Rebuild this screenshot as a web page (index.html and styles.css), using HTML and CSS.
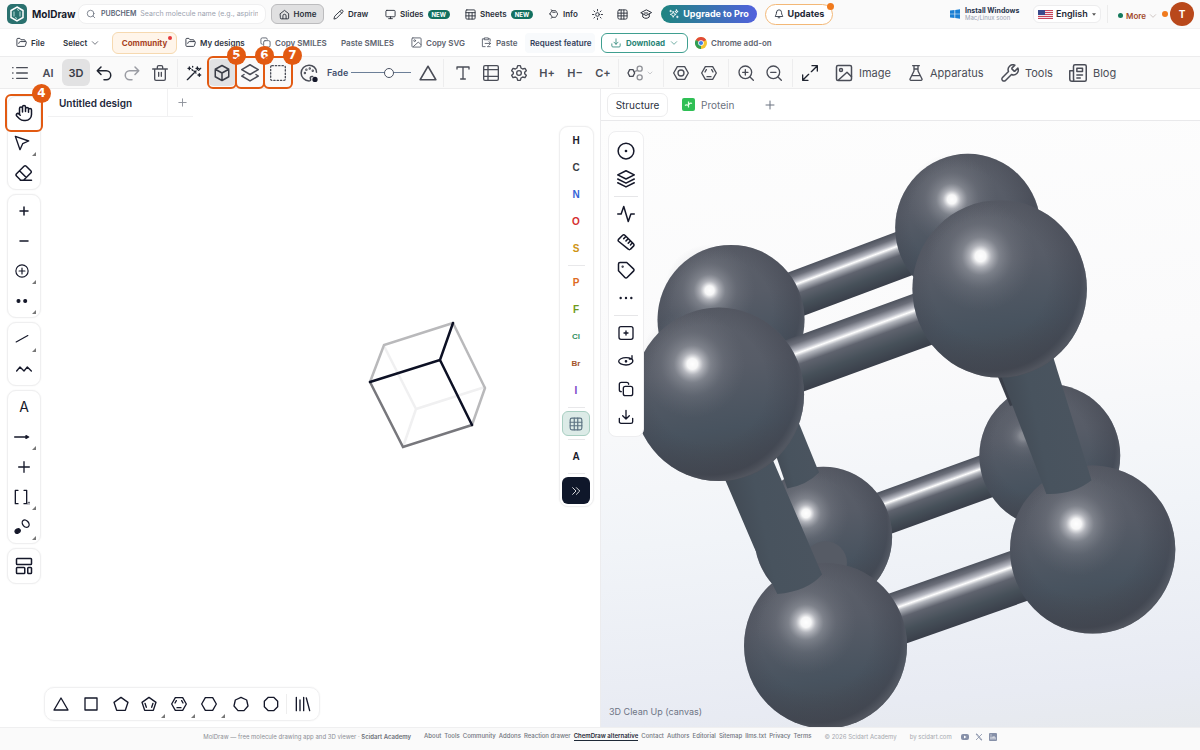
FILE: index.html
```
<!DOCTYPE html>
<html lang="en">
<head>
<meta charset="utf-8">
<title>MolDraw</title>
<link rel="stylesheet" href="styles.css">
</head>
<body>
<svg class="sprite" aria-hidden="true">
  <symbol id="home" viewBox="0 0 24 24"><path d="M3 10 12 3l9 7v10a1.500 1.500 0 0 1-1.500 1.500h-15A1.500 1.500 0 0 1 3 20zM8.500 21v-6a3.500 3.500 0 0 1 7 0v6"/></symbol>
  <symbol id="pencil" viewBox="0 0 24 24"><path d="M17 3a2.800 2.800 0 0 1 4 4L7.500 20.500 2 22l1.500-5.500zM15 5l4 4"/></symbol>
  <symbol id="monitor" viewBox="0 0 24 24"><rect x="2" y="3" width="20" height="14" rx="2"/><path d="M8 21h8M12 17v4"/></symbol>
  <symbol id="sheet" viewBox="0 0 24 24"><rect x="2" y="2" width="20" height="20" rx="2"/><path d="M2 8h20M2 15h20M8.500 8v14M15.500 8v14"/></symbol>
  <symbol id="info" viewBox="0 0 24 24"><path d="m8 4 8 0 5 8-5 8H8l-5-8zM8 4 5 2M3 12H0M8 20l-3 2M9 8h6"/></symbol>
  <symbol id="sun" viewBox="0 0 24 24"><circle cx="12" cy="12" r="4"/><path d="M12 1v3M12 20v3M1 12h3M20 12h3M4.200 4.200l2 2M17.800 17.800l2 2M4.200 19.800l2-2M17.800 6.200l2-2"/></symbol>
  <symbol id="grid" viewBox="0 0 24 24"><rect x="2" y="2" width="20" height="20" rx="3"/><path d="M2 9h20M2 15h20M9 2v20M15 2v20"/></symbol>
  <symbol id="cap" viewBox="0 0 24 24"><path d="M12 4 1.500 9.500 12 15l10.500-5.500zM5.500 12v6c4 3.500 9 3.500 13 0v-6M9 10h6"/></symbol>
  <symbol id="spark" viewBox="0 0 24 24"><path d="m10 6 2 5 5 2-5 2-2 5-2-5-5-2 5-2zM18 2l1 3 3 1-3 1-1 3-1-3-3-1 3-1zM4 3v4M2 5h4M20 17v4M18 19h4"/></symbol>
  <symbol id="bell" viewBox="0 0 24 24"><path d="M6 8a6 6 0 0 1 12 0c0 7 3 7 3 10H3c0-3 3-3 3-10M10 21h4"/></symbol>
  <symbol id="search" viewBox="0 0 24 24"><circle cx="11" cy="11" r="8"/><path d="m21 21-4.300-4.300"/></symbol>
  <symbol id="chev" viewBox="0 0 24 24"><path d="m4 8 8 8 8-8"/></symbol>
  <symbol id="folder" viewBox="0 0 24 24"><path d="m6 14 1.500-3A2 2 0 0 1 9.200 10H21a1.500 1.500 0 0 1 1.500 2l-2 7a2 2 0 0 1-2 1.500H4a2 2 0 0 1-2-2V5a2 2 0 0 1 2-2h4.500l2.500 3h7a2 2 0 0 1 2 2v2"/></symbol>
  <symbol id="copy" viewBox="0 0 24 24"><rect x="8" y="8" width="14" height="14" rx="3"/><path d="M5 16a3 3 0 0 1-3-3V5a3 3 0 0 1 3-3h8a3 3 0 0 1 3 3"/></symbol>
  <symbol id="image" viewBox="0 0 24 24"><rect x="2" y="2" width="20" height="20" rx="2"/><circle cx="8" cy="8" r="2"/><path d="m5 21 11-10 6 6"/></symbol>
  <symbol id="paste" viewBox="0 0 24 24"><path d="M8 4H3v17h6M16 4h4v5M8 2h8v4H8zM9 14h12M17 10l4 4-4 4M20 21h-6"/></symbol>
  <symbol id="download" viewBox="0 0 24 24"><path d="M12 2v13M7 10l5 5 5-5M2 14v5a2.500 2.500 0 0 0 2.500 2.500h15A2.500 2.500 0 0 0 22 19v-5"/></symbol>
  <symbol id="list" viewBox="0 0 24 24"><path d="M7 4h16M7 12h16M7 20h16M1 4h.5M1 12h.5M1 20h.5"/></symbol>
  <symbol id="undo" viewBox="0 0 24 24"><path d="M8 14 3 9l5-5M3 9h12a6 6 0 0 1 0 12h-3"/></symbol>
  <symbol id="redo" viewBox="0 0 24 24"><path d="m16 14 5-5-5-5M21 9H9a6 6 0 0 0 0 12h3"/></symbol>
  <symbol id="trash" viewBox="0 0 24 24"><path d="M1 6h22M4 6v15a2 2 0 0 0 2 2h12a2 2 0 0 0 2-2V6M8 6V3a2 2 0 0 1 2-2h4a2 2 0 0 1 2 2v3M10 11v6M14 11v6"/></symbol>
  <symbol id="wand" viewBox="0 0 24 24"><path d="M2 22 15 9M12 9l3 3M17 3v4M15 5h4M5 3v4M3 5h4M20 13v4M18 15h4M19 8l3-3M10 2v1M9 7l1 1"/></symbol>
  <symbol id="cube" viewBox="0 0 24 24"><path d="m12 2 9 5v10l-9 5-9-5V7zM3 7l9 5 9-5M12 12v10"/></symbol>
  <symbol id="layers2" viewBox="0 0 24 24"><path d="m12 1 11 6.500L12 14 1 7.500zM4 14l-3 2 11 6.500L23 16l-3-2"/></symbol>
  <symbol id="marquee" viewBox="0 0 24 24"><rect x="1" y="1" width="22" height="22" rx="2" stroke-dasharray="2 3"/></symbol>
  <symbol id="palette" viewBox="0 0 24 24"><path d="M22 11C22 5.500 17.500 1.500 12 1.500a10.500 10.500 0 0 0 0 21c2.500 0 2.500-1.500 2-2.700-.8-1.800 0-3.300 2-3.300h1"/><circle cx="6.500" cy="12" r=".6"/><circle cx="8.500" cy="7.500" r=".6"/><circle cx="13" cy="6" r=".6"/><circle cx="17" cy="9" r=".6"/><circle fill="#15182a" stroke="none" cx="20" cy="20.500" r="3.500"/></symbol>
  <symbol id="tri" viewBox="0 0 24 24"><path d="m12 3 10.500 18h-21z"/></symbol>
  <symbol id="text" viewBox="0 0 24 24"><path d="M3 6V3h18v3M12 3v18M8.500 21h7"/></symbol>
  <symbol id="table" viewBox="0 0 24 24"><rect x="1" y="1" width="22" height="22" rx="2"/><path d="M1 7h22M1 17h22M7.500 1v22"/></symbol>
  <symbol id="gear" viewBox="0 0 24 24"><path d="M10 1h4l1 3.500 2.500 1.500 3.500-1 2 3.500-2.500 2.500v2l2.500 2.500-2 3.500-3.500-1-2.500 1.500-1 3.500h-4l-1-3.500L6.500 18 3 19l-2-3.500L3.500 13v-2L1 8.500 3 5l3.500 1L9 4.500z"/><circle cx="12" cy="12" r="3.500"/></symbol>
  <symbol id="nodes" viewBox="0 0 24 24"><path d="M4 7h5l2.500 5L9 17H4l-2.500-5z"/><g opacity=".6"><circle cx="19" cy="5.500" r="3.800"/><circle cx="19" cy="18.500" r="3.800"/><path d="m11 10 5-2"/></g></symbol>
  <symbol id="benzene" viewBox="0 0 24 24"><path d="M6.500 2.500h11L23 12l-5.500 9.500h-11L1 12z"/><circle cx="12" cy="12" r="4.500"/></symbol>
  <symbol id="kekule" viewBox="0 0 24 24"><path d="M6.500 2.500h11L23 12l-5.500 9.500h-11L1 12zM9 17.500h6M6 10.500l2-3.500M16 7l2 3.500"/></symbol>
  <symbol id="zoomin" viewBox="0 0 24 24"><circle cx="11" cy="11" r="9.500"/><path d="m23 23-5-5M7 11h8M11 7v8"/></symbol>
  <symbol id="zoomout" viewBox="0 0 24 24"><circle cx="11" cy="11" r="9.500"/><path d="m23 23-5-5M7 11h8"/></symbol>
  <symbol id="expand" viewBox="0 0 24 24"><path d="M15 1h8v8M23 1l-9 9M9 23H1v-8M1 23l9-9"/></symbol>
  <symbol id="flask" viewBox="0 0 24 24"><path d="M7 1h10M9 1v8L3 21a1.500 1.500 0 0 0 1.500 2h15A1.500 1.500 0 0 0 21 21L15 9V1M6 16h12M9 6h6"/></symbol>
  <symbol id="wrench" viewBox="0 0 24 24"><path d="m14.500 6.500 3 3h1L22.500 5.500a6.500 6.500 0 0 1-8.500 8.500L6 22a2.800 2.800 0 0 1-4-4l8-8a6.500 6.500 0 0 1 8.500-8.500L14.500 5.500z"/></symbol>
  <symbol id="news" viewBox="0 0 24 24"><path d="M6 20V3a2 2 0 0 1 2-2h13a2 2 0 0 1 2 2v18a2 2 0 0 1-2 2H4a3 3 0 0 1-3-3V9h5v11a2 2 0 0 1-2 3M10.500 5.500H18V10h-7.500zM10.500 14.500H18M10.500 18.500H15"/></symbol>
  <symbol id="hand" viewBox="0 0 24 24"><path d="M18 11V6.500a2 2 0 0 0-4 0V5M14 10V4a2 2 0 0 0-4 0v2M10 10.500V6a2 2 0 0 0-4 0v8M18 8a2 2 0 1 1 4 0v6a8 8 0 0 1-8 8h-2c-2.800 0-4.500-.9-6-2.300L2.300 16a2 2 0 0 1 2.900-2.800L7 15"/></symbol>
  <symbol id="cursor" viewBox="0 0 24 24"><path d="m2 2 20 7-9 4-4 9z"/></symbol>
  <symbol id="eraser" viewBox="0 0 24 24"><path d="m7 21-5-5c-1-1-1-2 0-3L12 3c1-1 2-1 3 0l6 6c1 1 1 2 0 3l-9 9M22 21.500H7M6 9l9 9"/></symbol>
  <symbol id="plus" viewBox="0 0 24 24"><path d="M12 4v16M4 12h16"/></symbol>
  <symbol id="minus" viewBox="0 0 24 24"><path d="M4 12h16"/></symbol>
  <symbol id="cplus" viewBox="0 0 24 24"><circle cx="12" cy="12" r="10.500"/><path d="M12 7v10M7 12h10"/></symbol>
  <symbol id="dots2" viewBox="0 0 24 24"><g class="solid"><circle cx="6" cy="12" r="2.500"/><circle cx="17.500" cy="12" r="2.500"/></g></symbol>
  <symbol id="dots3" viewBox="0 0 24 24"><g class="solid"><circle cx="4" cy="12" r=".8"/><circle cx="12" cy="12" r=".8"/><circle cx="20" cy="12" r=".8"/></g></symbol>
  <symbol id="bond" viewBox="0 0 24 24"><path d="M2 17 22 6"/></symbol>
  <symbol id="chain" viewBox="0 0 24 24"><path d="m1 15 5-6 6 6 5-6 6 6"/></symbol>
  <symbol id="arrow" viewBox="0 0 24 24"><path d="M1 12h18M18 10l4 2-4 2z"/></symbol>
  <symbol id="brackets" viewBox="0 0 24 24"><path d="M6 2H2v20h4M15 2h4v20h-4"/><path stroke-width="1" d="M21 23v-3h3v3"/></symbol>
  <symbol id="orbital" viewBox="0 0 24 24"><ellipse class="solid" cx="5.500" cy="18" rx="4" ry="3" transform="rotate(-25 5.500 18)"/><ellipse cx="17.500" cy="7" rx="4.500" ry="6" transform="rotate(-40 17.500 7)"/></symbol>
  <symbol id="template" viewBox="0 0 24 24"><rect x="2" y="2" width="20" height="8" rx="1"/><rect x="2" y="14" width="11" height="8" rx="1"/><rect x="17" y="14" width="5" height="8" rx="1"/></symbol>
  <symbol id="square" viewBox="0 0 24 24"><path d="M3 3h18v18H3z"/></symbol>
  <symbol id="penta" viewBox="0 0 24 24"><path d="m12 2 10.500 7.500-4 12h-13l-4-12z"/></symbol>
  <symbol id="penta2" viewBox="0 0 24 24"><path d="m12 2 10.500 7.500-4 12h-13l-4-12zM6 11l2 6M18 11l-2 6"/></symbol>
  <symbol id="hex" viewBox="0 0 24 24"><path d="M6.500 2.500h11L23 12l-5.500 9.500h-11L1 12z"/></symbol>
  <symbol id="hepta" viewBox="0 0 24 24"><path d="m12 2 8.500 4L22.500 15l-6 7h-9l-6-7 2-9z"/></symbol>
  <symbol id="octa" viewBox="0 0 24 24"><path d="M8 2h8l6 6v8l-6 6H8l-6-6V8z"/></symbol>
  <symbol id="library" viewBox="0 0 24 24"><path d="M2 2v20M7.500 6v16M13 2v20M17 3l5 19"/></symbol>
  <symbol id="dbl" viewBox="0 0 24 24"><path d="m4 4 8 8-8 8M13 4l8 8-8 8"/></symbol>
  <symbol id="target" viewBox="0 0 24 24"><circle cx="12" cy="12" r="10.500"/><circle class="solid" cx="12" cy="12" r=".8"/></symbol>
  <symbol id="layers3" viewBox="0 0 24 24"><path d="m12 1 11 5.500L12 12 1 6.500zM1 12l11 5.500L23 12M1 17l11 5.500L23 17"/></symbol>
  <symbol id="pulse" viewBox="0 0 24 24"><path d="M1 12h4.500L9 2l6 20 3.500-10H23"/></symbol>
  <symbol id="ruler" viewBox="0 0 24 24"><path d="m2 8.500 5.500-5.500a2 2 0 0 1 3 0L22 14.500a2 2 0 0 1 0 3L18 21.500a2 2 0 0 1-3 0L2 11a2 2 0 0 1 0-2.500M11.500 5 9 7.500M14.500 8 12 10.500M17.500 11 15 13.500M20 13.500 18 16"/></symbol>
  <symbol id="tag" viewBox="0 0 24 24"><path d="M13 2H4a2 2 0 0 0-2 2v9l8.500 9a2 2 0 0 0 3 0l8.500-8.500a2 2 0 0 0 0-3z"/><circle class="solid" cx="7.500" cy="7.500" r=".5"/></symbol>
  <symbol id="splus" viewBox="0 0 24 24"><rect x="1.500" y="2.500" width="21" height="19" rx="3"/><path d="M12 9v6M9 12h6"/></symbol>
  <symbol id="orbit" viewBox="0 0 24 24"><path d="M21 9c4 5-3 9-9 9S1 15.500 1 12.500 6 7 12 7c3 0 6 .5 9 2M21 4v5h-4"/><circle class="solid" cx="12" cy="12.500" r="1"/></symbol>
  <symbol id="corner" viewBox="0 0 6 6"><path d="M6 0v6H0z"/></symbol>
</svg>

<header class="topbar">
  <div class="brand">
    <svg class="logo" viewBox="0 0 20 20"><rect width="20" height="20" rx="5" fill="#2a716f"/><path d="m10 3 6 3.500v7L10 17l-6-3.500v-7z" fill="none" stroke="#fff" stroke-width="1.500"/><path d="M7 7.500v5M13 7.500v5M10 5.500l2 1M8 13.500l2 1" stroke="#b8e0da" stroke-width="1"/></svg>
    <strong>MolDraw</strong>
  </div>
  <div class="search">
    <svg class="ic s10"><use href="#search"/></svg>
    <label for="q">PUBCHEM</label>
    <input id="q" type="text" placeholder="Search molecule name (e.g., aspirin)">
  </div>
  <button class="nav home"><svg class="ic s11"><use href="#home"/></svg>Home</button>
  <button class="nav"><svg class="ic s11"><use href="#pencil"/></svg>Draw</button>
  <button class="nav"><svg class="ic s11"><use href="#monitor"/></svg>Slides<span class="new">NEW</span></button>
  <button class="nav"><svg class="ic s11"><use href="#sheet"/></svg>Sheets<span class="new">NEW</span></button>
  <button class="nav"><svg class="ic s10"><use href="#info"/></svg>Info</button>
  <button class="nav" aria-label="Theme"><svg class="ic s11"><use href="#sun"/></svg></button>
  <button class="nav" aria-label="Periodic table"><svg class="ic s11"><use href="#grid"/></svg></button>
  <button class="nav" aria-label="Learn"><svg class="ic s12"><use href="#cap"/></svg></button>
  <button class="upgrade"><svg class="ic s10"><use href="#spark"/></svg>Upgrade to Pro</button>
  <button class="updates"><svg class="ic s10"><use href="#bell"/></svg>Updates<i class="odot"></i></button>
  <span></span>
  <a class="install" href="#"><svg class="win" viewBox="0 0 10 10"><path fill="#1a7fd4" d="M0 1.500 4.500 1v3.700H0zM5.200.9 10 .2v4.500H5.200zM0 5.300h4.500V9L0 8.500zM5.200 5.300H10v4.500l-4.800-.7z"/></svg><span><b>Install Windows</b><small>Mac/Linux soon</small></span></a>
  <div class="lang">
    <svg class="flag" viewBox="0 0 15 9"><path fill="#f3e6e9" d="M0 0h15v9H0z"/><path stroke="#c8435a" d="M0 .5h15M0 2.500h15M0 4.500h15M0 6.500h15M0 8.500h15"/><path fill="#3a4a8c" d="M0 0h7v5H0z"/></svg>
    <select aria-label="Language"><option>English</option></select>
    <svg class="caret" viewBox="0 0 6 4"><path d="M0 0h6L3 4z"/></svg>
  </div>
  <i class="vline"></i>
  <button class="more"><i class="gdot"></i>More<svg class="ic s8"><use href="#chev"/></svg><i class="bdot"></i></button>
  <button class="avatar">T</button>
</header>

<nav class="menubar">
  <button class="menu"><svg class="ic s11"><use href="#folder"/></svg>File</button>
  <button class="menu">Select<svg class="ic s8"><use href="#chev"/></svg></button>
  <button class="community">Community<i class="rdot"></i></button>
  <button class="menu"><svg class="ic s11"><use href="#folder"/></svg>My designs</button>
  <button class="menu soft"><svg class="ic s11"><use href="#copy"/></svg>Copy SMILES</button>
  <button class="menu soft">Paste SMILES</button>
  <button class="menu soft"><svg class="ic s11"><use href="#image"/></svg>Copy SVG</button>
  <button class="menu soft"><svg class="ic s11"><use href="#paste"/></svg>Paste</button>
  <button class="request">Request feature</button>
  <button class="dl"><svg class="ic s10"><use href="#download"/></svg>Download<svg class="ic s8"><use href="#chev"/></svg></button>
  <a class="menu soft" href="#"><svg class="chrome" viewBox="0 0 12 12"><circle cx="6" cy="6" r="6" fill="#f4c430"/><path fill="#e04a3a" d="M6 6 .8 3A6 6 0 0 1 11.200 3z"/><path fill="#2f9e57" d="M6 6 .8 3A6 6 0 0 0 6 12z"/><circle cx="6" cy="6" r="2.800" fill="#fff"/><circle cx="6" cy="6" r="2.100" fill="#3f7fe8"/></svg>Chrome add-on</a>
</nav>

<div class="toolbar">
  <div class="tg">
    <button class="tb"><svg class="ic s16"><use href="#list"/></svg></button>
    <button class="tb">AI</button>
    <button class="tb on">3D</button>
    <button class="tb"><svg class="ic s18 dark"><use href="#undo"/></svg></button>
    <button class="tb"><svg class="ic s18 faint"><use href="#redo"/></svg></button>
    <button class="tb"><svg class="ic s16"><use href="#trash"/></svg></button>
  </div>
  <div class="tg line p2">
    <button class="tb"><svg class="ic s16 dark"><use href="#wand"/></svg></button>
    <button class="tb on"><svg class="ic s18"><use href="#cube"/></svg><span class="mark"><b>5</b></span></button>
    <button class="tb"><svg class="ic s18"><use href="#layers2"/></svg><span class="mark"><b>6</b></span></button>
    <button class="tb"><svg class="ic s16"><use href="#marquee"/></svg><span class="mark"><b>7</b></span></button>
  </div>
  <div class="tg">
    <button class="tb"><svg class="ic s18"><use href="#palette"/></svg></button>
    <label class="fade" for="fade">Fade</label>
    <input id="fade" class="range" type="range" min="0" max="100" value="66">
    <button class="tb"><svg class="ic s18"><use href="#tri"/></svg></button>
  </div>
  <div class="tg line p5">
    <button class="tb"><svg class="ic s16"><use href="#text"/></svg></button>
    <button class="tb"><svg class="ic s16"><use href="#table"/></svg></button>
    <button class="tb"><svg class="ic s16"><use href="#gear"/></svg></button>
    <button class="tb">H+</button>
    <button class="tb">H−</button>
    <button class="tb">C+</button>
  </div>
  <div class="tg line p5">
    <button class="tb nodes"><svg class="ic s16"><use href="#nodes"/></svg><svg class="ic s6 faint"><use href="#chev"/></svg></button>
  </div>
  <div class="tg line p3">
    <button class="tb"><svg class="ic s16"><use href="#benzene"/></svg></button>
    <button class="tb"><svg class="ic s16"><use href="#kekule"/></svg></button>
  </div>
  <div class="tg line p3">
    <button class="tb"><svg class="ic s16"><use href="#zoomin"/></svg></button>
    <button class="tb"><svg class="ic s16"><use href="#zoomout"/></svg></button>
  </div>
  <div class="tg line p3">
    <button class="tb"><svg class="ic s16 dark"><use href="#expand"/></svg></button>
  </div>
  <button class="link"><svg class="ic s18"><use href="#image"/></svg>Image</button>
  <button class="link"><svg class="ic s16"><use href="#flask"/></svg>Apparatus</button>
  <button class="link"><svg class="ic s18"><use href="#wrench"/></svg>Tools</button>
  <button class="link"><svg class="ic s18"><use href="#news"/></svg>Blog</button>
</div>

<main class="work">
  <section class="editor">
    <aside class="rail">
      <div class="card">
        <button class="rb"><svg class="ic s18"><use href="#hand"/></svg><span class="mark wide"><b>4</b></span></button>
        <button class="rb left"><svg class="ic s16"><use href="#cursor"/></svg><svg class="cn"><use href="#corner"/></svg></button>
        <button class="rb"><svg class="ic s18"><use href="#eraser"/></svg></button>
      </div>
      <div class="card">
        <button class="rb"><svg class="ic s12 thick"><use href="#plus"/></svg></button>
        <button class="rb"><svg class="ic s12 thick"><use href="#minus"/></svg></button>
        <button class="rb left"><svg class="ic s14"><use href="#cplus"/></svg><svg class="cn"><use href="#corner"/></svg></button>
        <button class="rb left"><svg class="ic s14"><use href="#dots2"/></svg><svg class="cn"><use href="#corner"/></svg></button>
      </div>
      <div class="card">
        <button class="rb left"><svg class="ic s14"><use href="#bond"/></svg><svg class="cn"><use href="#corner"/></svg></button>
        <button class="rb"><svg class="ic s16"><use href="#chain"/></svg></button>
      </div>
      <div class="card">
        <button class="rb letter">A</button>
        <button class="rb left"><svg class="ic s16"><use href="#arrow"/></svg><svg class="cn"><use href="#corner"/></svg></button>
        <button class="rb"><svg class="ic s16"><use href="#plus"/></svg></button>
        <button class="rb left"><svg class="ic s16"><use href="#brackets"/></svg><svg class="cn"><use href="#corner"/></svg></button>
        <button class="rb left"><svg class="ic s16"><use href="#orbital"/></svg><svg class="cn"><use href="#corner"/></svg></button>
      </div>
      <div class="card last">
        <button class="rb"><svg class="ic s18"><use href="#template"/></svg></button>
      </div>
    </aside>
    <div class="sheet">
      <div class="tabs">
        <button class="doc">Untitled design</button>
        <button class="add" aria-label="New design"><svg class="ic s11"><use href="#plus"/></svg></button>
      </div>
      <div class="canvas">
        <svg class="drawing" viewBox="0 0 124 134">
          <g fill="none" stroke-width="2.500" stroke-linecap="round">
            <path stroke="#f0f0f1" d="M18 29 50 92M50 92l69-22M50 92l-13 38"/>
            <path stroke="#b9b9bb" d="M87 6 18 28 4 65M87 6l32 65-13 37"/>
            <path stroke="#77777c" d="m4 65 33 65 69-22"/>
            <path stroke="#0c1024" d="m4 65 70-22L87 6M74 43l32 65"/>
          </g>
        </svg>
      </div>
      <div class="rings">
        <button class="rg"><svg class="ic s16"><use href="#tri"/></svg></button>
        <button class="rg"><svg class="ic s16"><use href="#square"/></svg></button>
        <button class="rg"><svg class="ic s16"><use href="#penta"/></svg></button>
        <button class="rg left"><svg class="ic s16"><use href="#penta2"/></svg><svg class="cn"><use href="#corner"/></svg></button>
        <button class="rg left"><svg class="ic s16"><use href="#kekule"/></svg><svg class="cn"><use href="#corner"/></svg></button>
        <button class="rg left"><svg class="ic s16"><use href="#hex"/></svg><svg class="cn"><use href="#corner"/></svg></button>
        <button class="rg"><svg class="ic s16"><use href="#hepta"/></svg></button>
        <button class="rg"><svg class="ic s16"><use href="#octa"/></svg></button>
        <button class="rg lib"><svg class="ic s16"><use href="#library"/></svg></button>
      </div>
    </div>
    <aside class="elements">
      <button class="el">H</button>
      <button class="el c">C</button>
      <button class="el n">N</button>
      <button class="el o">O</button>
      <button class="el s">S</button>
      <hr>
      <button class="el p">P</button>
      <button class="el f">F</button>
      <button class="el cl">Cl</button>
      <button class="el br">Br</button>
      <button class="el i">I</button>
      <hr>
      <button class="el pt" aria-label="Periodic table"><svg class="ic s14"><use href="#grid"/></svg></button>
      <hr>
      <button class="el">A</button>
      <hr>
      <button class="el go" aria-label="Collapse"><svg class="ic s10"><use href="#dbl"/></svg></button>
    </aside>
  </section>

  <section class="viewer">
    <div class="vtabs">
      <button class="vt on">Structure</button>
      <button class="vt prot"><svg class="pi" viewBox="0 0 13 13"><rect width="13" height="13" rx="2" fill="#2fbf55"/><path d="M3 7.500c2-2 2.500 1 4-1s1-2 3-1M6.500 3.500v6" fill="none" stroke="#e6ffe9" stroke-width="1.200"/></svg>Protein</button>
      <button class="vt" aria-label="Add view"><svg class="ic s12"><use href="#plus"/></svg></button>
    </div>
    <div class="stage">
      <svg class="scene" viewBox="0 1 600 606" preserveAspectRatio="xMidYMid slice">
        <defs>
          <linearGradient id="base" x1=".4" y1="0" x2=".55" y2="1"><stop offset="0" stop-color="#5c606a"/><stop offset=".35" stop-color="#575c67"/><stop offset=".7" stop-color="#48535f"/><stop offset="1" stop-color="#42474f"/></linearGradient>
          <radialGradient id="rim" cx=".44" cy=".44" r=".57"><stop offset=".6" stop-color="#40434e" stop-opacity="0"/><stop offset=".92" stop-color="#40434e" stop-opacity=".5"/><stop offset="1" stop-color="#5a5d67" stop-opacity=".6"/></radialGradient>
          <radialGradient id="shine"><stop offset="0" stop-color="#fff"/><stop offset=".1" stop-color="#fff" stop-opacity=".95"/><stop offset=".2" stop-color="#eeeef2" stop-opacity=".6"/><stop offset=".35" stop-color="#c4c6cc" stop-opacity=".35"/><stop offset=".6" stop-color="#a0a2aa" stop-opacity=".17"/><stop offset="1" stop-color="#80838c" stop-opacity="0"/></radialGradient>
          <linearGradient id="rod" x1="0" y1="0" x2="0" y2="1"><stop offset="0" stop-color="#4d525d"/><stop offset=".12" stop-color="#6b6e79"/><stop offset=".24" stop-color="#b9bbc4"/><stop offset=".3" stop-color="#fff"/><stop offset=".36" stop-color="#b4b7be"/><stop offset=".5" stop-color="#5f636e"/><stop offset=".75" stop-color="#465059"/><stop offset="1" stop-color="#3a3f4a"/></linearGradient>
          <linearGradient id="post" x1="0" y1=".2" x2="1" y2="-.1"><stop offset="0" stop-color="#414953"/><stop offset=".3" stop-color="#48535e"/><stop offset=".7" stop-color="#4a545f"/><stop offset="1" stop-color="#424a54"/></linearGradient>
          <g id="ball"><circle r="100" fill="url(#base)"/><circle r="100" fill="url(#rim)"/></g>
          <circle id="glow" r="62" fill="url(#shine)"/>
        </defs>
        <g transform="scale(.3827 .3891)">
          <rect fill="url(#rod)" width="430" height="119" transform="translate(443 409) rotate(-20.200)"/>
          <use href="#ball" transform="translate(960 277) scale(1.900)"/>
          <use href="#glow" transform="translate(918 204) scale(1.900)"/>
          <use href="#ball" transform="translate(341 513) scale(1.920)"/>
          <use href="#glow" transform="translate(285 438) scale(1.920)"/>
          <rect fill="url(#rod)" width="400" height="112" transform="translate(677 974) rotate(-19.600)"/>
          <use href="#ball" transform="translate(1174 863) scale(1.840)"/>
          <use href="#glow" transform="translate(1105 812) scale(1.500)" opacity=".3"/>
          <path fill="#393e48" d="M1030 640l40 95 40-10-50-85z"/>
          <use href="#ball" transform="translate(582 1071) scale(1.800)"/>
          <use href="#glow" transform="translate(537 1011) scale(1.800)"/>
          <circle cx="588" cy="1138" r="56" fill="#565b65"/>
          <path fill="url(#post)" d="M430 780 518 778 571 906Q540 938 488 947z"/>
          <rect fill="url(#rod)" width="450" height="140" transform="translate(433 584) rotate(-19.700)"/>
          <rect fill="url(#rod)" width="420" height="136" transform="translate(708 1233) rotate(-19.100)"/>
          <use href="#ball" transform="translate(1286 1104) scale(2.160)"/>
          <use href="#glow" transform="translate(1243 1038) scale(2.160)"/>
          <path fill="url(#post)" d="M1040 640 1165 961Q1235 964 1283 926L1180 600z"/>
          <use href="#ball" transform="translate(588 1351) scale(2.130)"/>
          <use href="#glow" transform="translate(537 1291) scale(2.130)"/>
          <path fill="url(#post)" d="M315 900Q400 880 440 850L579 1168Q540 1212 462 1218L402 1100z"/>
          <use href="#ball" transform="translate(1043 434) scale(2.280)"/>
          <use href="#glow" transform="translate(993 350) scale(2.280)"/>
          <use href="#ball" transform="translate(309 705) scale(2.230)"/>
          <use href="#glow" transform="translate(240 627) scale(2.230)"/>
        </g>
      </svg>
      <div class="vtools">
        <button class="vb"><svg class="ic s18"><use href="#target"/></svg></button>
        <button class="vb"><svg class="ic s18"><use href="#layers3"/></svg></button>
        <hr>
        <button class="vb"><svg class="ic s18"><use href="#pulse"/></svg></button>
        <button class="vb"><svg class="ic s18"><use href="#ruler"/></svg></button>
        <button class="vb"><svg class="ic s18"><use href="#tag"/></svg></button>
        <button class="vb"><svg class="ic s16"><use href="#dots3"/></svg></button>
        <hr>
        <button class="vb"><svg class="ic s16"><use href="#splus"/></svg></button>
        <button class="vb"><svg class="ic s16"><use href="#orbit"/></svg></button>
        <button class="vb"><svg class="ic s16"><use href="#copy"/></svg></button>
        <button class="vb"><svg class="ic s16"><use href="#download"/></svg></button>
      </div>
      <p class="hint">3D Clean Up (canvas)</p>
    </div>
  </section>
</main>

<footer class="foot">
  <p>MolDraw — free molecule drawing app and 3D viewer · <b>Scidart Academy</b></p>
  <nav class="flinks">
    <a href="#">About</a><a href="#">Tools</a><a href="#">Community</a><a href="#">Addons</a><a href="#">Reaction drawer</a><a class="cur" href="#">ChemDraw alternative</a><a href="#">Contact</a><a href="#">Authors</a><a href="#">Editorial</a><a href="#">Sitemap</a><a href="#">llms.txt</a><a href="#">Privacy</a><a href="#">Terms</a>
  </nav>
  <p class="pale">© 2026 Scidart Academy</p>
  <div class="by">
    <p class="pale">by scidart.com</p>
    <a href="#" aria-label="YouTube"><svg viewBox="0 0 8 8"><rect y="1" width="8" height="6" rx="2" fill="#8690a8"/><path fill="#fff" d="m3 2.500 2.500 1.500L3 5.500z"/></svg></a>
    <a href="#" aria-label="X"><svg viewBox="0 0 8 8"><path d="m1 1 5 6h1L2 1zM7 1 1 7" fill="none" stroke="#8690a8" stroke-width=".8"/></svg></a>
    <a href="#" aria-label="LinkedIn"><svg viewBox="0 0 8 8"><rect width="8" height="8" rx="1" fill="#8690a8"/><path d="M2 3.500v3M2 1.500v1M4 6.500v-3M4 4.500c.5-1 2-1 2 .3v1.700" fill="none" stroke="#fff" stroke-width=".9"/></svg></a>
  </div>
</footer>
</body>
</html>
```
FILE: styles.css
```
* { box-sizing: border-box; }
body { margin: 0; min-height: 100vh; display: flex; flex-direction: column; background: #fff; color: #1f2937; font-family: Inter, "Liberation Sans", sans-serif; font-size: 8px; line-height: 12px; }
button, input, select { font: inherit; color: inherit; border: 0; background: none; padding: 0; margin: 0; }
button { display: flex; align-items: center; white-space: nowrap; }
a { color: inherit; text-decoration: none; }
p { margin: 0; }
.sprite { position: absolute; width: 0; height: 0; }
.ic { fill: none; stroke: currentColor; stroke-width: 2; stroke-linecap: round; stroke-linejoin: round; flex: none; }
.solid { fill: currentColor; }
.s6 { width: 6px; height: 6px; }
.s8 { width: 8px; height: 8px; }
.s10 { width: 10px; height: 10px; }
.s11 { width: 11px; height: 11px; }
.s12 { width: 12px; height: 12px; }
.s14 { width: 14px; height: 14px; }
.s16 { width: 16px; height: 16px; }
.s18 { width: 18px; height: 18px; }
.dark { color: #1f2430; }
.faint { color: #9a9ca3; }
.thick { stroke-width: 3; }

.topbar { display: grid; grid-template-columns: 71px 193px 62px 52px 80px 84px 43px 25px 23px 21px 104px 67px 1fr 83px 74px 11px 52px 24px; align-items: center; height: 28px; padding: 0 6px 0 7px; background: #fafafa; }
.brand { display: flex; align-items: center; gap: 5px; font-size: 10px; color: #15192a; }
.logo { width: 20px; height: 20px; }
.search { display: flex; align-items: center; width: 188px; height: 20px; padding: 0 7px; background: #fff; border: 1px solid #efeff0; border-radius: 8px; color: #6b7280; }
.search label { margin: 0 4px 0 5px; font-size: 7px; font-weight: 600; color: #5b6577; }
.search input { flex: 1; min-width: 0; font-size: 7px; outline: none; }
.search input::placeholder { color: #9ca3af; }
.nav { gap: 4px; font-weight: 600; color: #2b303b; }
.home { width: 53px; height: 20px; justify-content: center; background: #e0e0e1; border: 1px solid #bcbcbe; border-radius: 6px; }
.new { padding: 0 4px; border-radius: 5px; background: #12705f; color: #fff; font-size: 6px; line-height: 9px; font-weight: 700; }
.upgrade { width: 96px; height: 18px; justify-content: center; gap: 4px; border-radius: 9px; background: linear-gradient(90deg, #1e8580, #5261dd); color: #fff; font-size: 9px; font-weight: 700; }
.updates { position: relative; width: 68px; height: 21px; justify-content: center; gap: 4px; border: 1px solid #f3b877; border-radius: 11px; background: #fff; font-size: 9px; font-weight: 700; }
.odot { position: absolute; right: -2px; top: -2px; width: 7px; height: 7px; border-radius: 50%; background: #f07a1d; }
.install { display: flex; align-items: center; gap: 5px; white-space: nowrap; }
.win { width: 10px; height: 10px; }
.install b, .install small { display: block; font-size: 7px; line-height: 8px; font-weight: 700; color: #27324a; }
.install small { font-size: 6px; line-height: 6px; font-weight: 400; color: #99a2b3; }
.lang { display: flex; align-items: center; width: 68px; height: 18px; gap: 3px; padding: 0 4px; border: 1px solid #ededee; border-radius: 6px; background: #fff; font-size: 9px; font-weight: 600; }
.lang select { appearance: none; flex: 1; min-width: 0; }
.flag { width: 15px; height: 9px; flex: none; }
.caret { width: 4px; height: 3px; fill: #555; }
.vline { width: 1px; height: 18px; background: #ececec; }
.more { gap: 3px; padding-top: 3px; font-weight: 600; font-size: 8px; color: #a2492b; }
.more .ic { color: #b8aca7; }
.gdot, .bdot { width: 5px; height: 5px; border-radius: 50%; background: #147a5c; }
.bdot { width: 6px; height: 6px; margin: 0 0 3px 2px; background: #f07a1d; }
.avatar { width: 24px; height: 24px; justify-content: center; border-radius: 50%; background: #b9481b; color: #fff; font-size: 10px; font-weight: 700; }

.menubar { display: grid; grid-template-columns: 47px 49px 73px 75px 81px 70px 70px 44px 76px 94px auto; justify-content: start; align-items: center; height: 28px; padding-left: 16px; border-top: 1px solid #f2f2f3; background: #fff; }
.menu { display: flex; align-items: center; gap: 4px; font-weight: 600; color: #2f3542; white-space: nowrap; }
.soft { color: #5d636e; }
.community { position: relative; width: 65px; height: 22px; justify-content: center; border: 1px solid #f6d9b0; border-radius: 6px; background: #fff5ea; color: #a8431f; font-weight: 700; }
.rdot { position: absolute; right: 4px; top: 3px; width: 4px; height: 4px; border-radius: 50%; background: #e5383b; }
.request { width: 70px; height: 20px; padding-left: 5px; border-radius: 4px; background: #f8fafc; font-weight: 600; color: #33405a; }
.dl { width: 87px; height: 20px; justify-content: center; gap: 5px; border: 1px solid #3f9f90; border-radius: 6px; background: #fff; color: #2a8577; font-weight: 700; }
.chrome { width: 12px; height: 12px; }

.toolbar { display: grid; grid-template-columns: 171px 118px 148px 175px 45px 65px 64px 43px 73px 93px 68px auto; justify-content: start; align-items: center; height: 33px; padding-left: 6px; border-top: 1px solid #ececed; border-bottom: 1px solid #ececed; background: #fafafa; color: #4a4d57; }
.tg { display: flex; align-items: center; height: 28px; }
.line { border-left: 1px solid #ededee; }
.p2 { padding-left: 2px; }
.p3 { padding-left: 3px; }
.p5 { padding-left: 5px; }
.tb { position: relative; justify-content: center; width: 28px; height: 27px; border-radius: 6px; font-size: 11px; font-weight: 600; }
.on { background: #e2e2e3; color: #3a3d47; }
.nodes { width: 32px; gap: 4px; }
.fade { width: 28px; padding-left: 4px; font-size: 9px; font-weight: 600; color: #44506e; }
.range { appearance: none; width: 60px; height: 12px; margin: 0 3px 0 0; background: linear-gradient(#6c7f98, #6c7f98) center / 100% 1px no-repeat; }
.range::-webkit-slider-thumb { appearance: none; width: 10px; height: 10px; border: 1px solid #4a5262; border-radius: 50%; background: #fff; }
.mark { position: absolute; inset: -3px -1px; border: 2px solid #e25a12; border-radius: 6px; z-index: 2; }
.mark b { position: absolute; right: -11px; top: -12px; width: 19px; height: 19px; border-radius: 50%; background: #e25a12; color: #fff; font-family: "DejaVu Sans", sans-serif; font-size: 12px; line-height: 19px; text-align: center; }
.wide { inset: -4px -3px; }
.wide b { right: -10px; }
.link { gap: 6px; font-size: 11px; font-weight: 400; }

.work { flex: 1; display: grid; grid-template-columns: 1fr 1fr; }
.editor { display: grid; grid-template-columns: 44px 1fr 41px; }
.rail { display: flex; flex-direction: column; gap: 4px; padding: 7px 3px 0 7px; }
.card { display: flex; flex-direction: column; padding: 1px 0; border: 1px solid #efeff0; border-radius: 9px; background: #fff; box-shadow: 0 0 2px rgba(0, 0, 0, .06); color: #15182a; }
.last { padding: 2px 0; }
.rb { position: relative; justify-content: center; height: 30px; }
.left { padding-right: 4px; }
.letter { font-size: 14px; }
.cn { position: absolute; right: 4px; bottom: 2px; width: 4px; height: 4px; fill: #777; }
.sheet { display: flex; flex-direction: column; }
.tabs { display: flex; margin-left: 4px; height: 28px; width: 145px; border-bottom: 1px solid #f1f1f2; }
.doc { flex: 1; padding-left: 11px; border-right: 1px solid #f1f1f2; font-size: 10px; font-weight: 600; color: #22263a; }
.add { width: 25px; padding-left: 4px; justify-content: center; color: #8b8f98; }
.canvas { position: relative; flex: 1; }
.drawing { position: absolute; left: 322px; top: 200px; width: 124px; height: 134px; }
.rings { display: flex; align-self: start; margin-bottom: 6px; padding: 0 1px; height: 34px; border: 1px solid #f0f0f1; border-radius: 10px; box-shadow: 0 0 2px rgba(0, 0, 0, .06); color: #15182a; }
.rg { position: relative; width: 30px; justify-content: center; }
.lib { width: 32px; margin: 6px 0; border-left: 1px solid #eee; }
.rings .cn { right: 1px; }
.elements { align-self: start; display: flex; flex-direction: column; width: 35px; margin-top: 37px; padding: 0 3px 2px 2px; border: 1px solid #efeff0; border-radius: 9px; background: #fff; box-shadow: 0 0 2px rgba(0, 0, 0, .06); }
.elements hr { width: 17px; height: 1px; margin: 3px auto; border: 0; background: #e8e8ea; }
.el { justify-content: center; height: 27px; font-family: "Liberation Sans", Arial, sans-serif; font-size: 10px; font-weight: 700; color: #1c202c; }
.c { color: #3a3d45; }
.n { color: #3565d8; }
.o { color: #d52f2f; }
.s { color: #cf9413; }
.p { color: #dd6a23; }
.f { color: #6f9a1c; }
.cl, .br { font-size: 8px; color: #2f8f60; }
.br { color: #a3532b; }
.i { color: #7b45c9; }
.pt { height: 25px; border: 1px solid #a9cfc2; border-radius: 6px; background: #dcebe7; color: #5c7383; }
.go { border-radius: 6px; background: #0f172a; color: #fff; }

.viewer { display: flex; flex-direction: column; border-left: 1px solid #ececee; }
.vtabs { display: flex; align-items: center; height: 32px; padding-left: 6px; border-bottom: 1px solid #e9e9eb; }
.vt { justify-content: center; height: 24px; font-size: 10px; color: #6b7280; }
.vt.on { width: 61px; border: 1px solid #ededee; border-radius: 7px; background: #fff; color: #2a3140; font-weight: 400; }
.prot { gap: 6px; margin: 0 30px 0 14px; }
.pi { width: 13px; height: 13px; }
.stage { position: relative; flex: 1; overflow: hidden; background: linear-gradient(175deg, #fdfdfd 0, #fafafb 40%, #f1f4f8 65%, #e8ebf3 92%, #e6e9ed 100%); }
.scene { position: absolute; inset: 0; width: 100%; height: 100%; }
.vtools { position: absolute; left: 7px; top: 10px; width: 36px; padding: 5px 3px; border: 1px solid #eeeef0; border-radius: 8px; background: #fff; color: #15182a; }
.vtools hr { height: 1px; margin: 3px 2px; border: 0; background: #e6e6e8; }
.vb { width: 100%; height: 28px; justify-content: center; }
.hint { position: absolute; left: 8px; bottom: 9px; font-size: 9px; color: #6d7484; }

.foot { display: flex; justify-content: center; align-items: center; gap: 13px; height: 23px; padding-bottom: 5px; border-top: 1px solid #efeff0; background: #fafafa; font-size: 6px; line-height: 8px; color: #8b8e95; white-space: nowrap; }
.foot b { font-weight: 600; color: #6c7078; }
.flinks { display: flex; gap: 3px; color: #70747d; font-weight: 500; }
.cur { color: #1f2937; font-weight: 600; border-bottom: 1px solid #1f2937; }
.pale { color: #a5a8ae; }
.by { display: flex; gap: 6px; }
.by p { margin-right: 3px; }
.by svg { display: block; width: 8px; height: 8px; }
```
